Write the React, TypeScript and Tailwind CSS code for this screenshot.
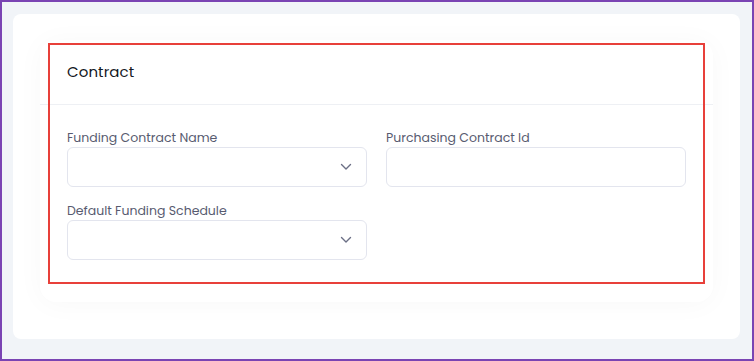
import React from "react";

function Chevron() {
  return (
    <svg width="12" height="8" viewBox="0 0 12 8" fill="none" className="text-[#6b6f85]">
      <path d="M1.5 1.5 L6 6 L10.5 1.5" stroke="currentColor" strokeWidth="1.4" strokeLinecap="round" strokeLinejoin="round" />
    </svg>
  );
}

function Field({ label, select }: { label: string; select?: boolean }) {
  return (
    <div className="flex flex-col">
      <div className="h-[18px] text-[12.5px] leading-[18px] text-[#585b70]">{label}</div>
      <div className="h-[40px] rounded-md border border-[#e3e5ee] bg-white flex items-center justify-end pr-[14px]">
        {select ? <Chevron /> : null}
      </div>
    </div>
  );
}

export default function App() {
  return (
    <div
      className="w-[754px] h-[361px] border-2 border-[#7a44b3] bg-[#f1f4f8] pt-[12px] pl-[11px] pr-[12px] pb-[20px]"
      style={{ fontFamily: "Poppins, 'Open Sans', 'Noto Sans', sans-serif" }}
    >
      <div className="relative h-full rounded-lg bg-white pt-[26px] px-[27px]">
        <div className="rounded-2xl bg-white shadow-[0_2px_28px_rgba(15,23,42,0.03)] h-[262px]">
          <div className="h-[65px] border-b border-[#eef0f4] flex items-center pl-[27px]">
            <span className="text-[15px] text-[#141824] tracking-[0.1px]">Contract</span>
          </div>
          <div className="px-[27px] pt-[24px] grid grid-cols-2 gap-x-[19px] gap-y-[15px]">
            <Field label="Funding Contract Name" select />
            <Field label="Purchasing Contract Id" />
            <Field label="Default Funding Schedule" select />
          </div>
        </div>
        <div className="absolute left-[35px] top-[29px] w-[657px] h-[241px] border-2 border-[#e8403a] pointer-events-none" />
      </div>
    </div>
  );
}
